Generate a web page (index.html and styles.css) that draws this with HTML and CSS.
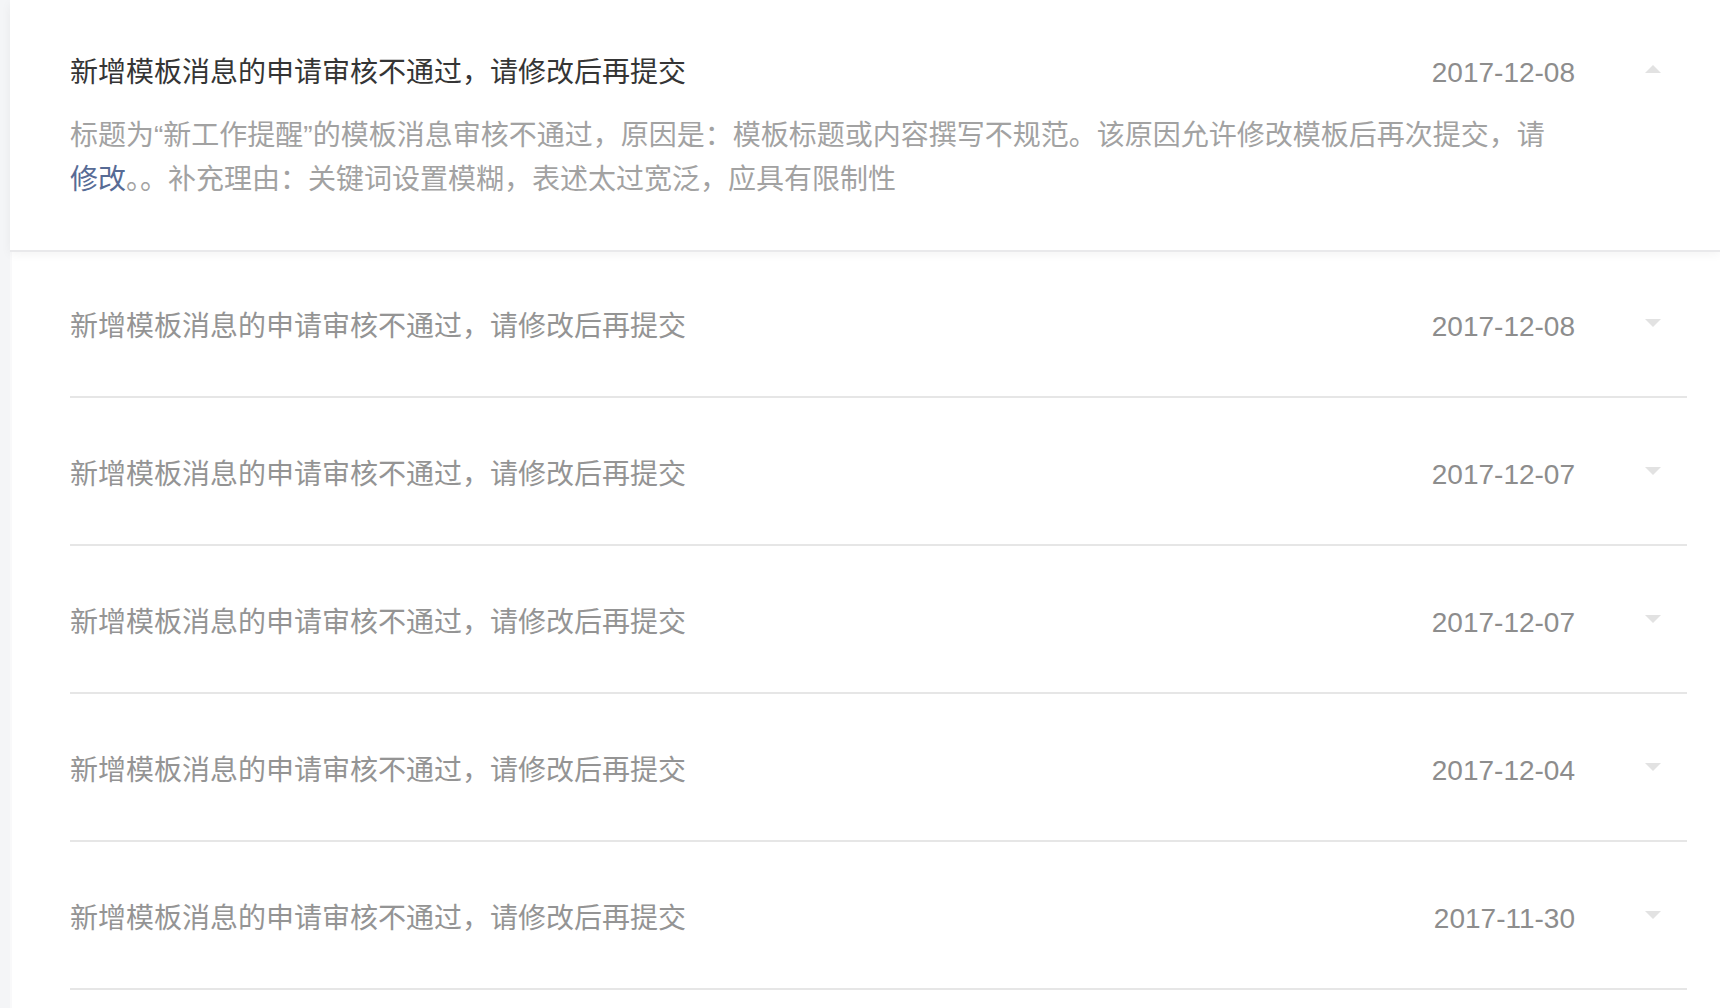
FILE: index.html
```html
<!DOCTYPE html>
<html lang="zh-CN">
<head>
<meta charset="utf-8">
<title>消息列表</title>
<link rel="stylesheet" href="styles.css">
</head>
<body>
<div class="page">
  <div class="list">
    <div class="card">
      <div class="row">
        <div class="title title-active">新增模板消息的申请审核不通过，请修改后再提交</div>
        <div class="date">2017-12-08</div>
        <div class="arrow arrow-up"></div>
      </div>
      <p class="desc">标题为“新工作提醒”的模板消息审核不通过，原因是：模板标题或内容撰写不规范。该原因允许修改模板后再次提交，请<a class="link" href="#">修改</a>。。补充理由：关键词设置模糊，表述太过宽泛，应具有限制性</p>
    </div>
    <div class="item">
      <div class="row">
        <div class="title">新增模板消息的申请审核不通过，请修改后再提交</div>
        <div class="date">2017-12-08</div>
        <div class="arrow arrow-down"></div>
      </div>
    </div>
    <div class="item">
      <div class="row">
        <div class="title">新增模板消息的申请审核不通过，请修改后再提交</div>
        <div class="date">2017-12-07</div>
        <div class="arrow arrow-down"></div>
      </div>
    </div>
    <div class="item">
      <div class="row">
        <div class="title">新增模板消息的申请审核不通过，请修改后再提交</div>
        <div class="date">2017-12-07</div>
        <div class="arrow arrow-down"></div>
      </div>
    </div>
    <div class="item">
      <div class="row">
        <div class="title">新增模板消息的申请审核不通过，请修改后再提交</div>
        <div class="date">2017-12-04</div>
        <div class="arrow arrow-down"></div>
      </div>
    </div>
    <div class="item">
      <div class="row">
        <div class="title">新增模板消息的申请审核不通过，请修改后再提交</div>
        <div class="date">2017-11-30</div>
        <div class="arrow arrow-down"></div>
      </div>
    </div>
  </div>
</div>
</body>
</html>
```
FILE: styles.css
```css
html, body {
  margin: 0;
  padding: 0;
  background: #f4f5f7;
  height: 100%;
  overflow: hidden;
}
body {
  font-family: "Liberation Sans", "Noto Sans CJK SC", sans-serif;
  font-size: 28px;
  line-height: 44px;
}
.page {
  padding-left: 10px;
  height: 100%;
}
.list {
  background: #fff;
  min-height: 100%;
  border-left: 2px solid #f9f9fa;
}
.card {
  position: relative;
  background: #fff;
  padding: 51px 33px 48px 60px;
  box-shadow: 0 2px 0 #e9e9eb, 0 4px 10px rgba(0, 0, 0, 0.05);
  margin-left: -2px;
}
.row {
  display: flex;
  align-items: center;
  height: 44px;
}
.title {
  flex: 1;
  color: #949494;
  white-space: nowrap;
}
.title-active {
  color: #353535;
}
.date {
  color: #8d8d8d;
}
.arrow {
  width: 0;
  height: 0;
  margin-left: 70px;
  margin-right: 26px;
  border-left: 8px solid transparent;
  border-right: 8px solid transparent;
  position: relative;
  top: -4px;
}
.arrow-up {
  border-bottom: 8px solid #e2e2e2;
}
.arrow-down {
  border-top: 8px solid #e2e2e2;
}
.desc {
  margin: 19px 127px 0 0;
  color: #a2a2a2;
}
.link {
  color: #576b95;
  text-decoration: none;
}
.item {
  margin: 0 33px 0 58px;
  padding: 55px 0 47px;
  border-bottom: 2px solid #e6e6e6;
}
```
